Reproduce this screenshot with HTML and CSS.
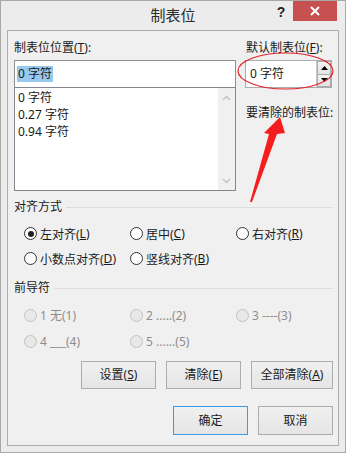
FILE: index.html
```html
<!DOCTYPE html>
<html>
<head>
<meta charset="utf-8">
<link rel="stylesheet" href="styles.css">
</head>
<body>
<div class="window">
  <div class="titlebar">
    <div class="spacer"></div>
    <div class="title">制表位</div>
    <div class="help">?</div>
    <div class="close"><svg width="10" height="10" viewBox="0 0 10 10"><path d="M1 1 L9 9 M9 1 L1 9" stroke="#fff" stroke-width="2"/></svg></div>
  </div>
  <div class="client">
    <div class="top">
      <div class="leftcol">
        <div class="label">制表位位置(<u>T</u>):</div>
        <div class="entry"><span class="sel">0 字符</span></div>
        <div class="list">
          <div class="items">
            <div class="item">0 字符</div>
            <div class="item">0.27 字符</div>
            <div class="item">0.94 字符</div>
          </div>
          <div class="scroll">
            <svg width="9" height="6" viewBox="0 0 9 6"><path d="M1 5 L4.5 1.5 L8 5" fill="none" stroke="#c2c2c2" stroke-width="1.5"/></svg>
            <svg width="9" height="6" viewBox="0 0 9 6"><path d="M1 1 L4.5 4.5 L8 1" fill="none" stroke="#c2c2c2" stroke-width="1.5"/></svg>
          </div>
        </div>
      </div>
      <div class="rightcol">
        <div class="label">默认制表位(<u>F</u>):</div>
        <div class="spin">
          <span class="spintext">0 字符</span>
          <div class="spinbtns">
            <div class="sb"><svg width="7" height="4" viewBox="0 0 7 4"><path d="M0 4 L3.5 0 L7 4Z" fill="#000"/></svg></div>
            <div class="sb"><svg width="7" height="4" viewBox="0 0 7 4"><path d="M0 0 L3.5 4 L7 0Z" fill="#000"/></svg></div>
          </div>
        </div>
        <div class="label clear">要清除的制表位:</div>
      </div>
    </div>

    <div class="grouphead g1"><span>对齐方式</span><div class="rule"></div></div>
    <div class="radios r1">
      <div class="radio"><span class="dot on"></span>左对齐(<u>L</u>)</div>
      <div class="radio"><span class="dot"></span>居中(<u>C</u>)</div>
      <div class="radio"><span class="dot"></span>右对齐(<u>R</u>)</div>
      <div class="radio"><span class="dot"></span>小数点对齐(<u>D</u>)</div>
      <div class="radio"><span class="dot"></span>竖线对齐(<u>B</u>)</div>
    </div>

    <div class="grouphead g2"><span>前导符</span><div class="rule"></div></div>
    <div class="radios r2 disabled">
      <div class="radio"><span class="dot"></span>1 无(1)</div>
      <div class="radio"><span class="dot"></span>2 .....(2)</div>
      <div class="radio"><span class="dot"></span>3 ----(3)</div>
      <div class="radio"><span class="dot"></span>4 ___(4)</div>
      <div class="radio"><span class="dot"></span>5 ......(5)</div>
    </div>

    <div class="btnrow row1">
      <div class="btn">设置(<u>S</u>)</div>
      <div class="btn">清除(<u>E</u>)</div>
      <div class="btn wide">全部清除(<u>A</u>)</div>
    </div>
    <div class="btnrow row2">
      <div class="btn default">确定</div>
      <div class="btn">取消</div>
    </div>
  </div>
  <svg class="annot" width="346" height="453" viewBox="0 0 346 453">
    <ellipse cx="285.5" cy="71" rx="47.5" ry="18" fill="none" stroke="#e5222a" stroke-width="1.2"/>
    <polygon points="280,117 285,133 277,134 252,202 250,202 269,134 264,133" fill="#f51d1d"/>
  </svg>
</div>
</body>
</html>
```

FILE: styles.css
```css
* { box-sizing: border-box; }
html, body { margin: 0; padding: 0; background: #f0f0f0; }
body {
  font-family: "Noto Sans", "Noto Sans CJK SC", sans-serif;
  font-size: 12px;
  color: #1a1a1a;
}
u { text-decoration: underline; text-underline-offset: 1px; }

.window {
  position: relative;
  width: 346px;
  height: 453px;
  background: #ececec;
  border: 1px solid #a9a9a9;
  display: flex;
  flex-direction: column;
}

.titlebar {
  height: 29px;
  display: flex;
  align-items: flex-start;
}
.spacer { width: 76px; }
.title {
  flex: 1;
  text-align: center;
  font-family: "Noto Sans CJK SC", sans-serif;
  font-size: 15px;
  line-height: 20px;
  padding-top: 4px;
  color: #2b2b2b;
}
.help {
  width: 24px;
  height: 20px;
  text-align: center;
  font-family: "Liberation Sans", sans-serif;
  font-weight: bold;
  font-size: 14px;
  line-height: 20px;
  padding-top: 1px;
  color: #222;
}
.close {
  width: 44px;
  height: 20px;
  margin-right: 8px;
  background: #c75050;
  display: flex;
  align-items: center;
  justify-content: center;
}

.client {
  margin: 0 6px;
  height: 416px;
  border: 1px solid #adadad;
  background: #f0f0f0;
  padding: 9px 5px 0 6px;
  display: flex;
  flex-direction: column;
}

.top {
  display: flex;
  gap: 10px;
}
.leftcol { width: 222px; display: flex; flex-direction: column; }
.rightcol { width: 86px; display: flex; flex-direction: column; }
.label {
  line-height: 16px;
  height: 16px;
  margin-bottom: 4px;
  white-space: nowrap;
}

.entry {
  height: 27px;
  border: 1px solid #8e8f8f;
  border-bottom: none;
  background: #fff;
  padding: 4px 0 0 2px;
}
.sel {
  display: inline-block;
  background: #99c9ef;
  line-height: 16px;
  padding: 0 1px;
}
.list {
  height: 104px;
  border: 1px solid #828790;
  background: #fff;
  display: flex;
}
.items { flex: 1; padding: 1px 0 0 3px; }
.item { line-height: 17px; height: 17px; }
.scroll {
  width: 17px;
  background: #f0f0f0;
  display: flex;
  flex-direction: column;
  justify-content: space-between;
  align-items: center;
  padding: 7px 0 6px;
}

.spin {
  height: 28px;
  margin-left: -1px;
  width: 87px;
  border: 1px solid #acacac;
  background: #fff;
  display: flex;
  align-items: center;
  justify-content: space-between;
  padding-left: 4px;
}
.spintext { line-height: 16px; }
.spinbtns {
  width: 15px;
  height: 26px;
  display: flex;
  flex-direction: column;
  border-left: 1px solid #c8c8c8;
}
.sb {
  flex: 1;
  background: linear-gradient(#f2f2f2, #e4e4e4);
  border: 1px solid #acacac;
  display: flex;
  align-items: center;
  justify-content: center;
}
.sb + .sb { border-top: none; }
.clear { margin-top: 17px; }

.grouphead {
  display: flex;
  align-items: center;
  line-height: 16px;
  height: 16px;
}
.grouphead .rule {
  flex: 1;
  height: 1px;
  background: #dcdcdc;
  margin-left: 4px;
}
.g1 { margin-top: 8px; }
.g2 { margin-top: 9px; }

.radios {
  display: grid;
  grid-template-columns: 106px 106px auto;
  padding-left: 10px;
}
.r1 { margin-top: 6px; grid-auto-rows: 25px; }
.r2 { margin-top: 6px; grid-auto-rows: 26px; }
.radio {
  display: flex;
  align-items: center;
  white-space: nowrap;
}
.dot {
  width: 13px;
  height: 13px;
  border-radius: 50%;
  border: 1px solid #333;
  background: #fff;
  margin-right: 3px;
  display: flex;
  align-items: center;
  justify-content: center;
}
.dot.on::after {
  content: "";
  width: 6px;
  height: 6px;
  border-radius: 50%;
  background: #222;
}
.disabled .radio { color: #8d8d8d; }
.disabled .dot { border-color: #c2c2c2; background: #e8e8e8; }

.btnrow {
  display: flex;
  justify-content: flex-end;
  gap: 10px;
}
.row1 { margin-top: 7px; }
.row2 { margin-top: 17px; }
.btn {
  width: 75px;
  height: 28px;
  border: 1px solid #adadad;
  background: linear-gradient(#f0f0f0, #e5e5e5);
  display: flex;
  align-items: center;
  justify-content: center;
  line-height: 16px;
  white-space: nowrap;
}
.btn.wide { width: 82px; }
.row2 .btn { height: 29px; }
.btn.default { border-color: #3c9be8; }

.annot {
  position: absolute;
  left: -1px;
  top: -1px;
  pointer-events: none;
}
```
